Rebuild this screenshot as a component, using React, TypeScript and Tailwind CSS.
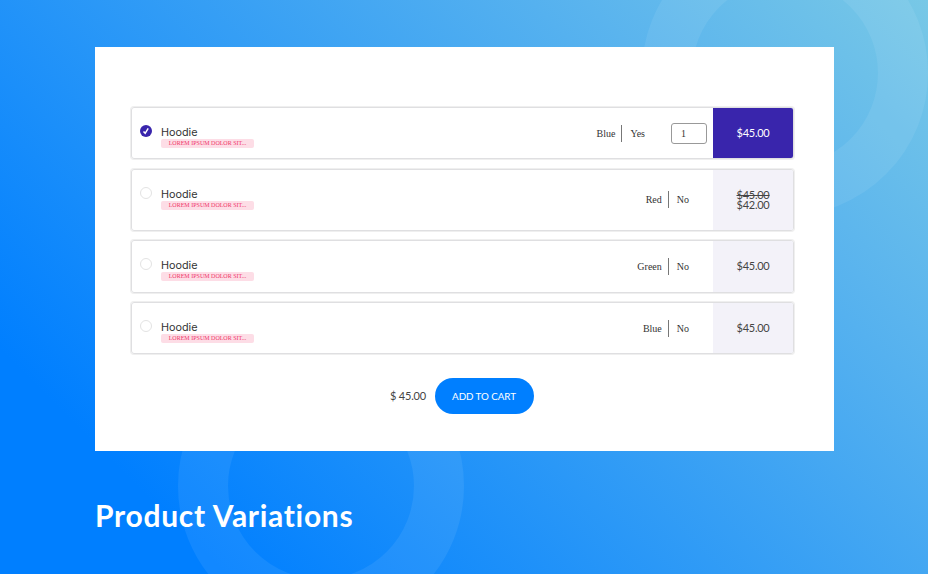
type Variation = {
  color: string;
  extra: string;
  price: string;
  oldPrice?: string;
  selected?: boolean;
  size: string;
};

const variations: Variation[] = [
  { color: "Blue", extra: "Yes", price: "$45.00", selected: true, size: "h-[52px]" },
  { color: "Red", extra: "No", price: "$42.00", oldPrice: "$45.00", size: "mt-[10px] h-[62px]" },
  { color: "Green", extra: "No", price: "$45.00", size: "mt-[9px] h-[53px]" },
  { color: "Blue", extra: "No", price: "$45.00", size: "mt-[9px] h-[52px]" },
];

function Radio({ checked }: { checked?: boolean }) {
  if (!checked) return <span className="h-3 w-3 shrink-0 rounded-full border border-[#e3e3e3]" />;
  return (
    <svg viewBox="0 0 12 12" className="h-3 w-3 shrink-0">
      <circle cx="6" cy="6" r="6" fill="#3925ac" />
      <path d="M3.5 6.5 5.2 8.3 8.2 3.3" fill="none" stroke="#fff" strokeWidth="1.5" />
    </svg>
  );
}

function Row({ v }: { v: Variation }) {
  return (
    <div className={`flex w-[663px] overflow-hidden rounded-[3px] border border-[#dfdfe1] shadow-[0_0_0_1px_#efefef] ${v.size}`}>
      <div className="flex flex-1 pl-[8.4px] pt-[17px]">
        <Radio checked={v.selected} />
        <div className="ml-[8.6px] flex flex-col">
          <span className="h-[14px] font-['Inter',sans-serif] text-[10.8px] leading-[15px] text-[#333]">Hoodie</span>
          <span className="flex h-[9px] w-[93px] items-center justify-center rounded-[2px] bg-[#fddde6] font-['Liberation_Serif',serif] text-[6px] leading-[9px] text-[#f0356b]">
            LOREM IPSUM DOLOR SIT...
          </span>
        </div>
      </div>
      <div
        className={`flex items-center font-['Liberation_Serif',serif] text-[10px] text-[#333] ${v.selected ? "pr-[6px]" : "pr-6"} ${
          v.oldPrice ? "pb-[2px]" : ""
        }`}
      >
        <span>{v.color}</span>
        <span className="ml-[6px] mr-[8px] h-[17px] w-px bg-[#777]" />
        <span>{v.extra}</span>
        {v.selected && (
          <span className="ml-[26px] flex h-[21px] w-9 items-center rounded-[3px] border border-[#999] pl-[9px]">1</span>
        )}
      </div>
      <div
        className={`flex w-20 flex-col items-center justify-center pb-px font-['Lato',sans-serif] text-[11px] leading-[10px] tracking-[-0.25px] ${
          v.selected ? "bg-[#3925ac] text-white" : "bg-[#f3f2f9] text-[#444]"
        }`}
      >
        {v.oldPrice && <span className="line-through">{v.oldPrice}</span>}
        <span>{v.price}</span>
      </div>
    </div>
  );
}

export default function App() {
  return (
    <div className="relative isolate h-[574px] w-[928px] overflow-hidden bg-[linear-gradient(45deg,#007fff_15%,#5ab4ee_77%,#78c8e6_100%)] pl-[95px] pt-[47px]">
      <div className="absolute left-[178px] top-[343px] -z-10 h-[286px] w-[286px] rounded-full border-[50px] border-white/[0.07]" />
      <div className="absolute left-[642px] top-[-70px] -z-10 h-[286px] w-[286px] rounded-full border-[50px] border-white/[0.07]" />
      <main className="h-[404px] w-[739px] bg-white pl-[36px] pt-[60px]">
        {variations.map((v, i) => (
          <Row key={i} v={v} />
        ))}
        <div className="mt-[24px] flex items-center pl-[259px]">
          <span className="w-[44.5px] whitespace-nowrap font-['Lato',sans-serif] text-[11px] tracking-[-0.2px] text-[#444]">$ 45.00</span>
          <button className="h-9 w-[99px] rounded-full bg-[#007fff] font-['Lato',sans-serif] text-[9.8px] tracking-[-0.05px] text-white">
            ADD TO CART
          </button>
        </div>
      </main>
      <h1 className="mt-[44px] font-['Lato',sans-serif] text-[30px] font-bold leading-[40px] tracking-[0.7px] text-white">Product Variations</h1>
    </div>
  );
}
